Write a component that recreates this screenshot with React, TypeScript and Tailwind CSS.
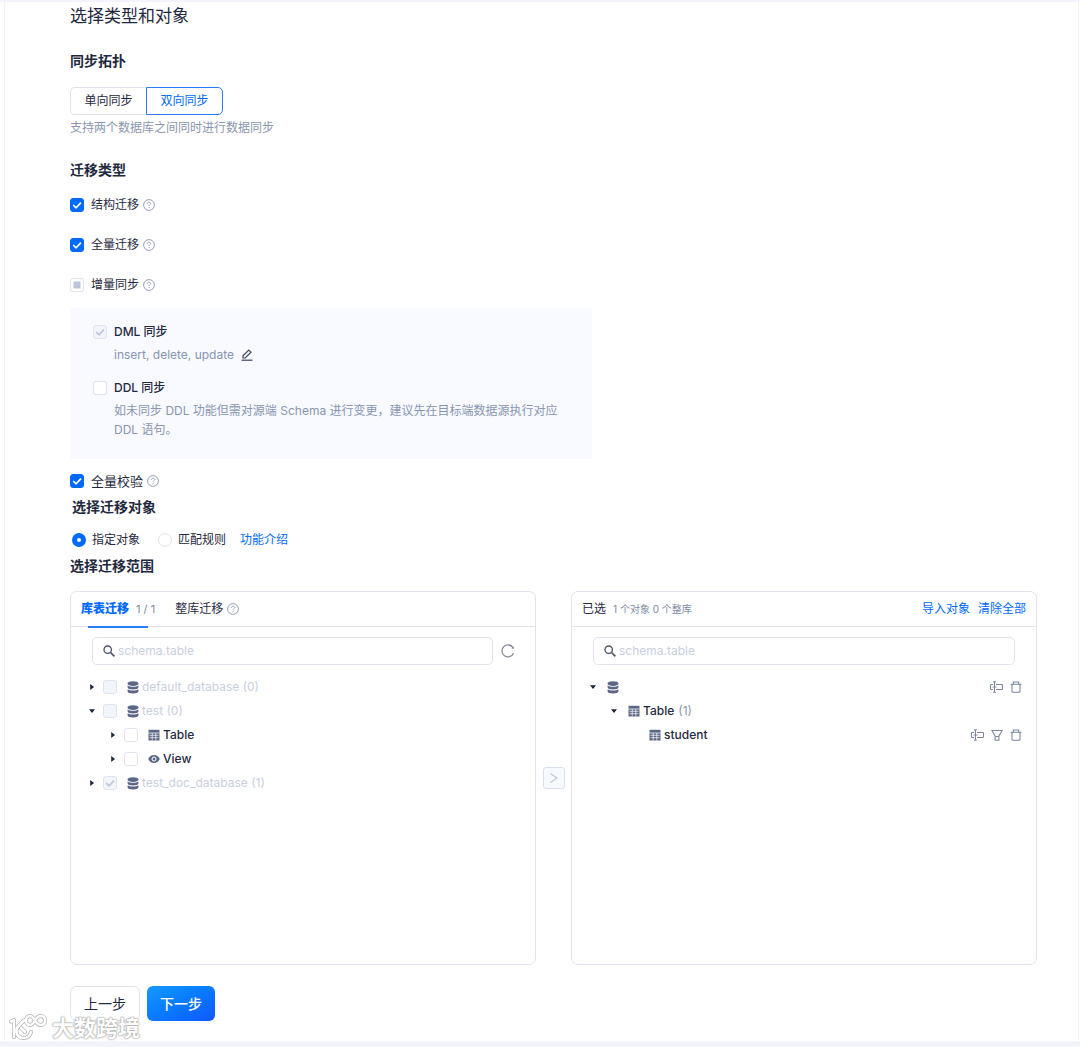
import { useId, useState } from 'react';
import type { ReactNode } from 'react';
import clsx from 'clsx';

type TreeNode = {
  label: string;
  level: number;
  open: boolean;
  icon: 'database' | 'table' | 'view';
  checked?: boolean;
  disabled?: boolean;
};

const sourceTree: TreeNode[] = [
  { label: 'default_database (0)', level: 0, open: false, icon: 'database', disabled: true },
  { label: 'test (0)', level: 0, open: true, icon: 'database', disabled: true },
  { label: 'Table', level: 1, open: false, icon: 'table' },
  { label: 'View', level: 1, open: false, icon: 'view' },
  { label: 'test_doc_database (1)', level: 0, open: false, icon: 'database', checked: true, disabled: true },
];

function HelpIcon() {
  return (
    <svg viewBox="0 0 12 12" className="size-3 shrink-0" fill="none" stroke="#97a0b8" aria-hidden="true">
      <circle cx="6" cy="6" r="5.4" strokeWidth="1" />
      <path d="M4.4 4.8c0-.9.7-1.6 1.600-1.600s1.600.6 1.600 1.500c0 1-1.600 1.200-1.600 2.300" strokeWidth="1" />
      <circle cx="6" cy="8.700" r="0.6" fill="#97a0b8" stroke="none" />
    </svg>
  );
}

function DatabaseIcon() {
  return (
    <svg viewBox="0 0 12 13" className="h-[13px] w-3 shrink-0" fill="#5b6785" aria-hidden="true">
      <path d="M6 .3c3 0 5.4.8 5.4 1.9v.9C11.400 4.200 9 5 6 5S.6 4.200.6 3.100v-.9C.6 1.100 3 .3 6 .3z" />
      <path d="M.6 4.500C1.700 5.400 3.700 5.800 6 5.800s4.300-.4 5.400-1.300v2.100C11.400 7.800 9 8.600 6 8.600S.6 7.800.6 6.600z" />
      <path d="M.6 8.200C1.700 9.100 3.700 9.500 6 9.500s4.300-.4 5.400-1.300v2.300c0 1.200-2.400 2-5.400 2s-5.400-.8-5.400-2z" />
    </svg>
  );
}

function TableIcon() {
  return (
    <svg viewBox="0 0 12 12" className="size-3 shrink-0" aria-hidden="true">
      <path d="M.5.8h11v10.700H.5z" fill="#5b6785" />
      <path d="M.5 4h11M1.500 6.300h9M1.500 8.700h9M4.200 4v7.500M7.800 4v7.500" fill="none" stroke="#fff" strokeWidth="0.700" />
    </svg>
  );
}

function ViewIcon() {
  return (
    <svg viewBox="0 0 12 12" className="size-3 shrink-0" aria-hidden="true">
      <path d="M.2 6C1.400 3.400 3.500 1.900 6 1.900S10.600 3.400 11.800 6C10.600 8.600 8.500 10.100 6 10.100S1.400 8.600.2 6z" fill="#5b6785" />
      <circle cx="6" cy="6" r="2" fill="none" stroke="#fff" strokeWidth="1" />
    </svg>
  );
}

function RenameIcon() {
  return (
    <svg viewBox="0 0 14 12" className="h-3 w-3.5 shrink-0" fill="none" stroke="#7d879f" aria-hidden="true">
      <path d="M4 3.500H1.500v5H4M7 3.500h6.500v5H7M5.500 1v10M4 .8h3M4 11.200h3M3.500 6h4" />
    </svg>
  );
}

function FilterIcon() {
  return (
    <svg viewBox="0 0 12 12" className="size-3 shrink-0" fill="none" stroke="#7d879f" strokeWidth="1.100" aria-hidden="true">
      <path d="M.9 1.500h10.200L7.900 7v4.200H4.100V7zM4.100 7.500h3.800" />
    </svg>
  );
}

function TrashIcon() {
  return (
    <svg viewBox="0 0 12 12" className="size-3 shrink-0" fill="none" stroke="#7d879f" strokeWidth="1.100" aria-hidden="true">
      <path d="M.6 3.200h10.800M3.300 3.200V1h5.400v2.200M2 3.200v7.100c0 .7.3 1 1 1h6c.7 0 1-.3 1-1V3.200" />
    </svg>
  );
}

const nodeIcons = { database: DatabaseIcon, table: TableIcon, view: ViewIcon };

function Caret({ open }: { open: boolean }) {
  return (
    <button type="button" aria-label={open ? '收起' : '展开'} className="flex size-2 shrink-0 items-center justify-center">
      <svg viewBox="0 0 8 8" className={clsx('size-2', open && 'rotate-90')} fill="#1a2338" aria-hidden="true">
        <path d="M2.200 1v6L6 4z" />
      </svg>
    </button>
  );
}

type CheckboxProps = {
  id: string;
  checked?: boolean;
  disabled?: boolean;
  mixed?: boolean;
};

function Checkbox({ id, checked = false, disabled = false, mixed = false }: CheckboxProps) {
  const [on, setOn] = useState(checked);
  return (
    <span className="grid size-3.5 shrink-0">
      <input
        id={id}
        type="checkbox"
        checked={on}
        disabled={disabled}
        onChange={e => setOn(e.target.checked)}
        className={clsx(
          'col-start-1 row-start-1 size-3.5 appearance-none rounded-[3px] border',
          disabled && !mixed && 'border-[#dfe3ef] bg-[#f3f5fc]',
          disabled && mixed && 'border-[#dfe3ef] bg-white',
          !disabled && on && 'border-[#006aff] bg-[#006aff]',
          !disabled && !on && 'border-[#dfe3ef] bg-white',
        )}
      />
      <svg viewBox="0 0 14 14" className="pointer-events-none col-start-1 row-start-1 size-3.5" fill="none" aria-hidden="true">
        {mixed && <rect x="3.500" y="3.500" width="7" height="7" fill="#bcc5da" />}
        {on && <path d="M3.200 7l2.800 2.800 5-5.200" stroke={disabled ? '#bcc5da' : '#fff'} strokeWidth="1.700" />}
      </svg>
    </span>
  );
}

function CheckRow({ children, ...box }: { children: ReactNode } & Omit<CheckboxProps, 'id'>) {
  const id = useId();
  return (
    <div className="flex h-5 items-center">
      <Checkbox id={id} {...box} />
      <label htmlFor={id} className="pr-1 pl-[7px]">{children}</label>
      <HelpIcon />
    </div>
  );
}

function SearchBox({ label }: { label: string }) {
  return (
    <label className="flex h-7 flex-1 items-center gap-[3px] rounded-[5px] border border-[#dfe3ef] px-2.5">
      <svg viewBox="0 0 12 12" className="size-3 shrink-0" fill="none" stroke="#4b5468" aria-hidden="true">
        <circle cx="4.700" cy="4.700" r="3.700" strokeWidth="1.300" />
        <path d="M7.500 7.500l3.900 3.900" strokeWidth="1.700" />
      </svg>
      <input
        type="text"
        aria-label={label}
        placeholder="schema.table"
        className="w-full min-w-0 text-xs outline-none placeholder:text-[#c8cfdf]"
      />
    </label>
  );
}

function SourceRow({ node }: { node: TreeNode }) {
  const id = useId();
  const Icon = nodeIcons[node.icon];
  return (
    <li className={clsx('flex h-6 items-center', node.level === 1 && 'pl-[21px]')}>
      <Caret open={node.open} />
      <span className="flex pr-2.5 pl-[7px]">
        <Checkbox id={id} checked={node.checked} disabled={node.disabled} />
      </span>
      <Icon />
      <label htmlFor={id} className={clsx('pl-[3px]', node.disabled ? 'text-[#c8cfdf]' : 'font-medium')}>
        {node.label}
      </label>
    </li>
  );
}

function IconButton({ label, children }: { label: string; children: ReactNode }) {
  return (
    <button type="button" aria-label={label} className="flex items-center">
      {children}
    </button>
  );
}

function Watermark() {
  return (
    <div className="absolute -bottom-0.5 left-2 flex items-center gap-1" aria-hidden="true">
      <svg viewBox="0 0 40 30" className="h-[30px] w-10" fill="none" strokeLinejoin="round" strokeLinecap="round">
        {[{ color: '#b0b0b4', width: 4 }, { color: '#fff', width: 2.6 }].map(line => (
          <g key={line.color} stroke={line.color} strokeWidth={line.width}>
            <path d="M3 8.500L6 7v17" />
            <path d="M16 7.500l-5.500 5.500C8.500 15 8.200 17 8.500 19c.6 4 3.500 6 7 6 3.800 0 6.500-2 7.500-6M13 15l4 4" />
            <path d="M22.500 3c-2.600 0-4.500 1.800-4.500 4.500S19.900 12 22.500 12c3.500 0 5-9 10-9C35.200 3 37 4.800 37 7.500S35.200 12 32.500 12c-5 0-6.500-9-10-9z" />
          </g>
        ))}
      </svg>
      <span className="text-[22px] leading-7 font-bold text-white [text-shadow:0_0_1px_#999,0_0_2px_#aaa,0_0_2px_#aaa]">大数跨境</span>
    </div>
  );
}

export default function App() {
  const [mode, setMode] = useState('指定对象');

  return (
    <div className="relative border-t-2 border-b-[6px] border-[#f3f4fb] bg-white pl-1 pr-px font-['Inter','Noto_Sans_CJK_SC',sans-serif] text-xs leading-5 text-[#1f2940]">
      <main className="border-x border-[#f0f1f9] pr-[41px] pb-5 pl-[65px]">
        <h1 className="text-[17px] leading-7">选择类型和对象</h1>

        {/* Topology */}
        <h2 className="mt-[21px] text-sm leading-5 font-bold">同步拓扑</h2>
        <div className="mt-4 flex">
          <button type="button" className="h-7 w-19 rounded-l-[5px] border border-r-0 border-[#dfe3ef]">单向同步</button>
          <button type="button" className="h-7 w-[77px] rounded-r-[5px] border border-[#2b7bff] text-[#006aff]">双向同步</button>
        </div>
        <p className="mt-[3px] text-[#8995b0]">支持两个数据库之间同时进行数据同步</p>

        {/* Migration types */}
        <h2 className="mt-[22px] text-sm leading-5 font-bold">迁移类型</h2>
        <div className="mt-[15px] flex flex-col gap-5">
          <CheckRow checked>结构迁移</CheckRow>
          <CheckRow checked>全量迁移</CheckRow>
          <CheckRow mixed disabled>增量同步</CheckRow>
        </div>

        <div className="mt-[13px] max-w-[522px] bg-[#f8faff] px-[23px] pt-3.5 pb-5">
          <div className="flex h-5 items-center gap-[7px]">
            <Checkbox id="dml" checked disabled />
            <label htmlFor="dml" className="font-medium">DML 同步</label>
          </div>
          <div className="mt-[3px] flex h-5 items-center gap-[7px] pl-[21px] text-[#8995b0]">
            insert, delete, update
            <IconButton label="编辑">
              <svg viewBox="0 0 12 12" className="size-3" fill="none" stroke="#3e475c" aria-hidden="true">
                <path d="M.5 11.200h11" strokeWidth="1.200" />
                <path d="M2 9V6.800L7.800 1l2.200 2.200L4.200 9z" strokeWidth="1.200" />
              </svg>
            </IconButton>
          </div>
          <div className="mt-[13px] flex h-5 items-center gap-[7px]">
            <Checkbox id="ddl" />
            <label htmlFor="ddl" className="font-medium">DDL 同步</label>
          </div>
          <p className="mt-[3px] pl-[21px] leading-[19px] text-[#8995b0]">
            如未同步 DDL 功能但需对源端 Schema 进行变更，建议先在目标端数据源执行对应 DDL 语句。
          </p>
        </div>

        <div className="mt-3 text-[13px]">
          <CheckRow checked>全量校验</CheckRow>
        </div>

        {/* Objects */}
        <div className="pl-0.5">
          <h2 className="mt-1.5 text-sm leading-5 font-bold">选择迁移对象</h2>
          <div className="mt-[13px] flex h-5 items-center">
            {['指定对象', '匹配规则'].map(name => (
              <label key={name} className="flex items-center gap-1.5 pr-[18px] last-of-type:pr-3.5">
                <input
                  type="radio"
                  name="mode"
                  checked={mode === name}
                  onChange={() => setMode(name)}
                  className="size-3.5 appearance-none rounded-full border border-[#dfe3ef] bg-white checked:border-[5px] checked:border-[#006aff]"
                />
                {name}
              </label>
            ))}
            <a href="#intro" className="text-[#006aff]">功能介绍</a>
          </div>
        </div>
        <h2 className="mt-1.5 text-sm leading-5 font-bold">选择迁移范围</h2>

        <div className="mt-[15px] flex items-stretch">
          <section className="min-h-[374px] min-w-0 flex-1 rounded-[7px] border border-[#dfe3ef]">
            <header className="flex h-[35px] items-center gap-5 border-b border-[#dfe3ef] px-2.5">
              <button type="button" className="relative flex h-full items-center gap-[7px]">
                <span className="font-black text-[#006aff]">库表迁移</span>
                <span className="text-[11px] text-[#7c88a5]">1 / 1</span>
                <span className="absolute inset-x-[7px] -bottom-0.5 h-0.5 bg-[#2b7bff]" />
              </button>
              <div className="flex items-center gap-1">
                <button type="button">整库迁移</button>
                <HelpIcon />
              </div>
            </header>
            <div className="flex items-center gap-2 pt-2.5 pr-5 pl-[21px]">
              <SearchBox label="搜索源端对象" />
              <IconButton label="刷新">
                <svg viewBox="0 0 14 14" className="size-3.5" fill="none" stroke="#858c9a" strokeWidth="1.300" aria-hidden="true">
                  <path d="M12.500 9.200A6 6 0 1 1 12.200 4" />
                  <path d="M12.900 2.200v2.600h-2.600z" fill="#858c9a" stroke="none" />
                </svg>
              </IconButton>
            </div>
            <ul className="pt-2.5 pl-[17px]">
              {sourceTree.map(node => (
                <SourceRow key={node.label} node={node} />
              ))}
            </ul>
          </section>

          <div className="flex w-[35px] shrink-0 items-center justify-center">
            <button type="button" aria-label="添加到已选" className="flex size-[22px] items-center justify-center rounded-[3px] border border-[#d9dfec] bg-[#f6f9ff]">
              <svg viewBox="0 0 12 12" className="size-3" fill="none" stroke="#bcc5da" strokeWidth="1.200" aria-hidden="true">
                <path d="M2.500 1.500L9 6l-6.500 4.500" />
              </svg>
            </button>
          </div>

          <section className="min-h-[374px] min-w-0 flex-1 rounded-[7px] border border-[#dfe3ef]">
            <header className="flex h-[35px] items-center border-b border-[#dfe3ef] px-2.5">
              <span>已选</span>
              <span className="pl-[7px] text-[10px] text-[#7c88a5]">1 个对象 0 个整库</span>
              <div className="ml-auto flex gap-2 text-[#006aff]">
                <button type="button">导入对象</button>
                <button type="button">清除全部</button>
              </div>
            </header>
            <div className="flex pt-2.5 pr-[21px] pl-[21px]">
              <SearchBox label="搜索已选对象" />
            </div>
            <ul className="pt-2.5 pr-3.5 pl-[17px]">
              <li className="flex h-6 items-center">
                <Caret open />
                <span className="pl-2.5"><DatabaseIcon /></span>
                <div className="ml-auto flex items-center gap-[7px]">
                  <IconButton label="重命名"><RenameIcon /></IconButton>
                  <IconButton label="移除"><TrashIcon /></IconButton>
                </div>
              </li>
              <li className="flex h-6 items-center pl-[21px]">
                <Caret open />
                <span className="pr-[3px] pl-2.5"><TableIcon /></span>
                <span className="font-medium">Table</span>
                <span className="pl-1 text-[#8995b0]">(1)</span>
              </li>
              <li className="flex h-6 items-center gap-[3px] pl-[60px]">
                <TableIcon />
                <span className="font-medium">student</span>
                <div className="ml-auto flex items-center gap-[7px]">
                  <IconButton label="重命名"><RenameIcon /></IconButton>
                  <IconButton label="过滤"><FilterIcon /></IconButton>
                  <IconButton label="移除"><TrashIcon /></IconButton>
                </div>
              </li>
            </ul>
          </section>
        </div>

        <div className="mt-[21px] flex gap-[7px] text-sm">
          <button type="button" className="h-[35px] w-[70px] rounded-[6px] border border-[#dfe3ef]">上一步</button>
          <button type="button" className="h-[35px] w-[68px] rounded-[6px] bg-linear-to-br from-[#1899ff] to-[#1455ff] font-medium text-white">下一步</button>
        </div>
      </main>
      <Watermark />
    </div>
  );
}
